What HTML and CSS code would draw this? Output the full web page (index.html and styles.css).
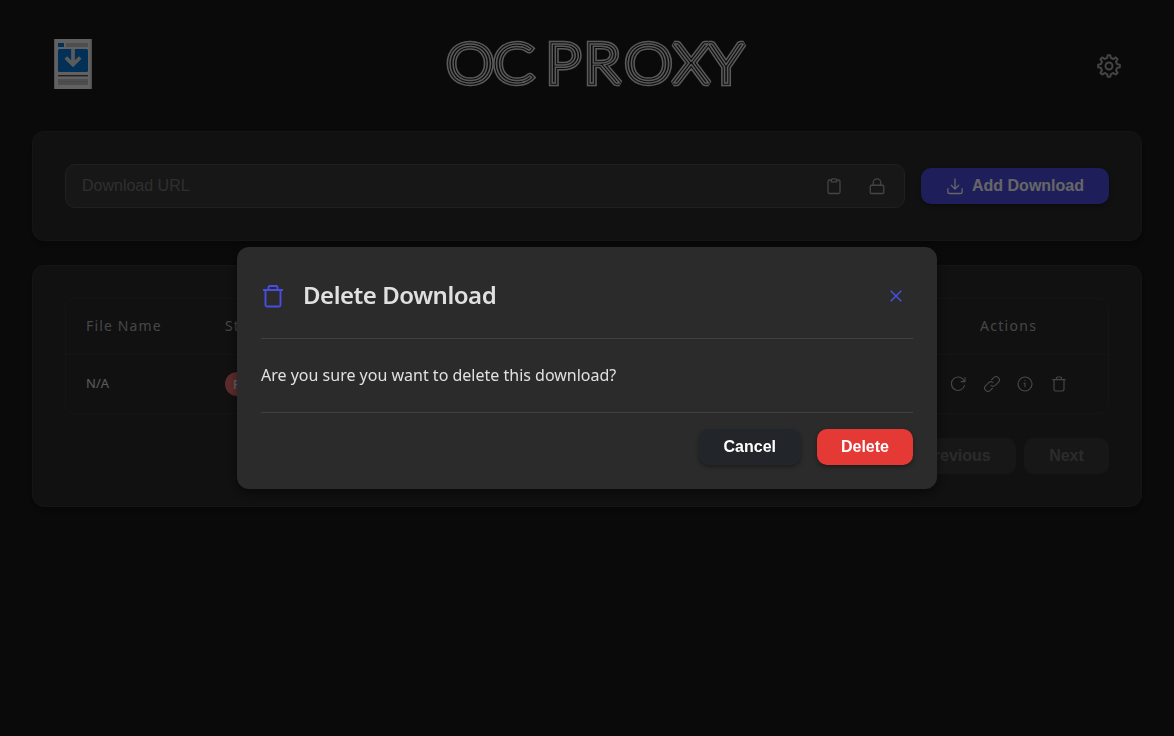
FILE: index.html
```html
<!DOCTYPE html>
<html lang="en">
<head>
<meta charset="utf-8">
<title>OC Proxy</title>
<link rel="stylesheet" href="styles.css">
</head>
<body>
<div class="app">
  <header class="header">
    <svg class="logo" width="38" height="50" viewBox="0 0 38 50">
      <path fill="#f2f2f2" d="M0 0h38v50H0z"/><path fill="#c8c8c8" d="M36.500 0H38v50h-1.500zM0 0h1v50H0z"/>
      <path fill="#0878d8" d="M4 4h6v4H4z"/><path fill="#c4c4c4" d="M12 4h22v4H12zM4 40h30v6H4z"/>
      <rect x="4" y="10" width="30" height="23" rx="1.500" fill="#0878d8"/>
      <path d="M19 10v16M11.800 18.500l7.200 7.200 7.200-7.200" fill="none" stroke="#e4e4e4" stroke-width="3.700"/>
      <path fill="#505050" d="M4 36h30v1.400H4z"/>
      <path stroke="#aaa" stroke-width=".7" d="M4 42.800h30"/>
    </svg>
    <svg class="wordmark" width="304" height="52" viewBox="444 36 304 52">
      <defs><text id="word" transform="scale(1.07 1)" y="83" x="416.400 459.800 509.300 544.800 583 627.500 661">OCPROXY</text></defs>
      <use href="#word" class="line l1"/><use href="#word" class="line l2"/><use href="#word" class="line l3"/>
    </svg>
    <svg class="icon gear" width="28" height="28" viewBox="0 0 24 24" stroke-width="1.500"><circle cx="12" cy="12" r="3"/><path d="M19.620 10.400l2.370.5v2.200l-2.370.5-.9 2.200 1.330 2-1.560 1.560-2-1.330-2.200.9-.5 2.370h-2.200l-.5-2.370-2.200-.9-2 1.330-1.560-1.560 1.330-2-.9-2.200-2.370-.5v-2.200l2.370-.5.9-2.200-1.330-2L6.890 4.640l2 1.330 2.200-.9.500-2.370h2.200l.5 2.370 2.200.9 2-1.330 1.560 1.560-1.330 2z" transform="translate(-.7)"/></svg>
  </header>

  <section class="card add">
    <div class="field">
      <span class="placeholder">Download URL</span>
      <svg class="icon" width="18" height="18" viewBox="0 0 24 24"><path d="M8.500 4H6a2 2 0 0 0-2 2v14a2 2 0 0 0 2 2h12a2 2 0 0 0 2-2V6a2 2 0 0 0-2-2h-2.500M8.500 6.500h7V4.200A1.700 1.700 0 0 0 13.800 2.500h-3.600a1.700 1.700 0 0 0-1.700 1.700z"/></svg>
      <svg class="icon" width="18" height="18" viewBox="0 0 24 24"><rect x="3" y="11" width="18" height="11" rx="1.500"/><path d="M7 11V7.500a5 5 0 0 1 10 0V11"/></svg>
    </div>
    <button class="btn primary"><svg class="icon" width="18" height="18" viewBox="0 0 24 24"><path d="M2.500 15v4.500A2.500 2.500 0 0 0 5 22h14a2.500 2.500 0 0 0 2.500-2.500V15M12 2v14M6.500 10.500L12 16l5.500-5.500"/></svg>Add Download</button>
  </section>

  <section class="card list">
    <div class="table">
      <div class="row head"><span>File Name</span><span>Status</span><span class="last">Actions</span></div>
      <div class="row">
        <span class="name">N/A</span><span><b class="badge">Failed</b></span>
        <div class="actions">
          <svg class="icon" width="16" height="16" viewBox="0 0 24 24"><path d="M21.500 8A10 10 0 1 0 22 13.500M22.500 2v6.500H16"/></svg>
          <svg class="icon" width="16" height="16" viewBox="0 0 24 24"><path d="M14 10.500a5 5 0 0 0-7-.5l-4.500 4.500a4.700 4.700 0 0 0 7 7l3.500-3.500M10 13.500a5 5 0 0 0 7 .5l4.500-4.500a4.700 4.700 0 0 0-7-7l-3.500 3.500"/></svg>
          <svg class="icon" width="16" height="16" viewBox="0 0 24 24"><circle cx="12" cy="12" r="10.500"/><path d="M10 11h2v6M12 6.500v1.500"/></svg>
          <svg class="icon" width="16" height="16" viewBox="0 0 24 24"><path d="M2 5.500h20M4.500 5.500V20a2.500 2.500 0 0 0 2.500 2.500h10a2.500 2.500 0 0 0 2.500-2.500V5.500M8 5.500V3.500A2 2 0 0 1 10 1.500h4a2 2 0 0 1 2 2v2"/></svg>
        </div>
      </div>
    </div>
    <div class="pager"><button class="btn off">Previous</button><button class="btn off">Next</button></div>
  </section>
</div>

<div class="overlay">
  <div class="modal" role="dialog">
    <div class="modal-head">
      <svg class="icon" width="24" height="24" viewBox="0 0 24 24"><path d="M2 6h20M4.500 6v15a1.500 1.500 0 0 0 1.500 1.500h12a1.500 1.500 0 0 0 1.500-1.500V6M7.500 6V3.500A1.500 1.500 0 0 1 9 2h6a1.500 1.500 0 0 1 1.500 1.500V6"/></svg>
      <h2>Delete Download</h2>
      <svg class="icon close" width="12" height="12" viewBox="0 0 12 12"><path d="M.7.700l10.600 10.600M11.300.700L.7 11.300"/></svg>
    </div>
    <p class="message">Are you sure you want to delete this download?</p>
    <div class="modal-foot"><button class="btn cancel">Cancel</button><button class="btn danger">Delete</button></div>
  </div>
</div>
</body>
</html>
```
FILE: styles.css
```css
* { box-sizing: border-box; }
body { margin: 0; height: 736px; overflow: hidden; background: #1a1a1a; color: #e0e0e0; font-family: "Noto Sans", sans-serif; }
.app { padding: 32px; }
.icon { display: block; flex: none; fill: none; stroke: currentColor; stroke-width: 1.7; stroke-linejoin: round; }
.header { display: flex; align-items: center; justify-content: space-between; height: 65px; padding: 0 19px 0 22px; }
.logo { margin-top: -2px; }
.wordmark { margin-left: 7px; margin-top: -5px; }
.gear { color: #aaa; margin-top: 2px; }
#word { font-family: Lato, sans-serif; font-weight: 300; font-size: 56px; }
.line { stroke-linejoin: miter; stroke-miterlimit: 2; }
.l1 { fill: #e0e0e0; stroke: #e0e0e0; stroke-width: 6.4; }
.l2 { fill: #1a1a1a; stroke: #1a1a1a; stroke-width: 3.5; }
.l3 { fill: #1a1a1a; stroke: #e0e0e0; stroke-width: 1.4; }
.card { border: 1px solid #353535; border-radius: 12px; background: #2b2b2b; box-shadow: 0 4px 6px rgba(0,0,0,.3); padding: 32px; }
.add { display: flex; align-items: center; gap: 16px; height: 110px; margin-top: 34px; }
.field { display: flex; align-items: center; flex: 1; height: 44px; padding: 0 18px 0 16px; border: 1px solid #505050; border-radius: 10px; background: #3b3b3b; color: #aaa; gap: 25px; }
.placeholder { flex: 1; color: #757575; font: 16px "Liberation Sans", Arial, sans-serif; }
.btn { display: flex; align-items: center; justify-content: center; height: 36px; padding: 0 24px; border: 0; border-radius: 10px; color: #fff; font: bold 16px "Liberation Sans", Arial, sans-serif; box-shadow: 0 2px 4px rgba(0,0,0,.35); }
.primary { width: 188px; padding: 0; gap: 8px; background: #4a4de2; }
.list { height: 242px; margin-top: 24px; }
.table { height: 116px; border: 1px solid #353535; border-radius: 10px; font-size: 13px; }
.row { display: grid; grid-template-columns: 139px 1fr 158px; align-items: center; height: 58px; padding-left: 20px; }
.head { height: 56px; padding-bottom: 2px; border-bottom: 1px solid #353535; color: #b0b0b0; font-size: 14px; letter-spacing: 1.15px; }
.head .last { padding-left: 30px; letter-spacing: 1.3px; }
.name { padding-bottom: 2px; }
.badge { display: inline-flex; align-items: center; height: 24px; padding: 0 8px; border-radius: 12px; background: #e97070; color: #fff; font-size: 12px; font-weight: 500; }
.actions { display: flex; gap: 17.500px; color: #b0b0b0; }
.pager { display: flex; justify-content: flex-end; gap: 8px; margin-top: 24px; }
.off { padding: 0 25.200px; background: #3b3b3b; color: #6b6b6b; box-shadow: none; }
.overlay { position: fixed; inset: 0; display: flex; align-items: center; justify-content: center; background: rgba(0,0,0,.6); }
.modal { width: 700px; height: 242px; padding: 24px; border-radius: 12px; background: #2b2b2b; box-shadow: 0 4px 12px rgba(0,0,0,.5); }
.modal-head { display: flex; align-items: center; height: 68px; padding-bottom: 18px; border-bottom: 1px solid #414141; color: #4a4de2; }
.modal-head .icon { stroke-width: 1.9; }
.modal-head h2 { flex: 1; margin: -3px 0 0 18px; color: #e0e0e0; font-size: 24px; font-weight: 600; letter-spacing: -.47px; }
.modal-head .close { margin-right: 11px; stroke-width: 1.5; }
.message { display: flex; align-items: center; height: 73px; margin: 0; padding-bottom: 2px; font-size: 16px; }
.modal-foot { display: flex; justify-content: flex-end; gap: 16px; padding-top: 16px; border-top: 1px solid #414141; }
.cancel { padding: 0 25px; background: #22262b; }
.danger { background: #e53935; }
```
